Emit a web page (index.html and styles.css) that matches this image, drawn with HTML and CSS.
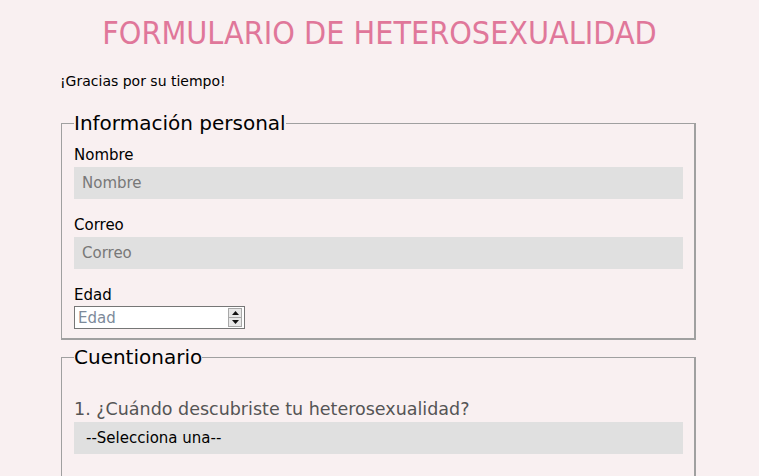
FILE: index.html
```html
<!DOCTYPE html>
<html lang="es">
<head>
<meta charset="utf-8">
<title>Formulario</title>
<link rel="stylesheet" href="styles.css">
</head>
<body>
<h1 class="title">FORMULARIO DE HETEROSEXUALIDAD</h1>
<main class="container">
  <p class="intro">¡Gracias por su tiempo!</p>
  <form class="form">
    <fieldset class="group">
      <legend class="legend">Información personal</legend>
      <label class="label" for="nombre">Nombre</label>
      <input class="field" id="nombre" type="text" placeholder="Nombre">
      <label class="label" for="correo">Correo</label>
      <input class="field" id="correo" type="email" placeholder="Correo">
      <label class="label" for="edad">Edad</label>
      <div class="num">
        <span class="num-ph">Edad</span>
        <span class="spin">
          <span class="spin-btn"><svg width="7" height="4" viewBox="0 0 7 4"><path d="M3.5 0 L7 4 L0 4Z" fill="#111"/></svg></span>
          <span class="spin-btn"><svg width="7" height="4" viewBox="0 0 7 4"><path d="M0 0 L7 0 L3.5 4Z" fill="#111"/></svg></span>
        </span>
      </div>
    </fieldset>
    <fieldset class="group group-q">
      <legend class="legend">Cuentionario</legend>
      <p class="question">1. ¿Cuándo descubriste tu heterosexualidad?</p>
      <div class="select">--Selecciona una--</div>
    </fieldset>
  </form>
</main>
</body>
</html>
```
FILE: styles.css
```css
html, body {
  margin: 0;
  padding: 0;
  background: #f9f0f1;
  font-family: "DejaVu Sans", sans-serif;
  color: #000;
}
.title {
  margin: 0;
  padding-top: 14px;
  text-align: center;
  font-weight: normal;
  font-size: 32px;
  line-height: 38px;
  color: #e0779a;
  font-family: "DejaVu Sans Condensed", "DejaVu Sans", sans-serif;
}
.container {
  width: 635px;
  margin: 0 0 0 61px;
}
.intro {
  margin: 20px 0 22px -1px;
  font-size: 14px;
  line-height: 18px;
}
.form {
  margin: 0;
}
.group {
  margin: 0 0 6px 0;
  padding: 9px 11px 9px 12px;
  border-color: #a0a0a0;
  border-style: solid;
  border-width: 1px 2px 2px 1px;
  display: flex;
  flex-direction: column;
  align-items: flex-start;
}
.legend {
  padding: 0;
  font-size: 20px;
  line-height: 22px;
}
.label {
  font-size: 15px;
  line-height: 18px;
  margin-top: 3px;
}
.field {
  box-sizing: border-box;
  width: 100%;
  height: 32px;
  margin: 3px 0 14px 0;
  padding: 0 8px;
  border: none;
  background: #e0e0e0;
  font-family: "DejaVu Sans", sans-serif;
  font-size: 15px;
  color: #000;
}
.field::placeholder {
  color: #787878;
}
.num {
  box-sizing: border-box;
  width: 171px;
  height: 23px;
  margin-top: 2px;
  border: 1px solid #767676;
  background: #fff;
  display: flex;
  align-items: center;
  justify-content: space-between;
  padding: 0 2px 0 3px;
}
.num-ph {
  font-size: 15px;
  color: #7d8a9a;
}
.spin {
  display: flex;
  flex-direction: column;
  border: 1px solid #a8a8a8;
  background: #e8e8e8;
}
.spin-btn {
  width: 12px;
  height: 8px;
  display: flex;
  align-items: center;
  justify-content: center;
}
.spin-btn + .spin-btn {
  border-top: 1px solid #a8a8a8;
}
.group-q {
  padding-top: 0;
  padding-bottom: 40px;
}
.question {
  margin: 30px 0 2px 0;
  font-size: 17.5px;
  line-height: 22px;
  color: #555;
}
.select {
  box-sizing: border-box;
  width: 100%;
  height: 32px;
  padding: 0 12px;
  background: #e0e0e0;
  font-size: 15px;
  line-height: 32px;
  color: #000;
}
```
